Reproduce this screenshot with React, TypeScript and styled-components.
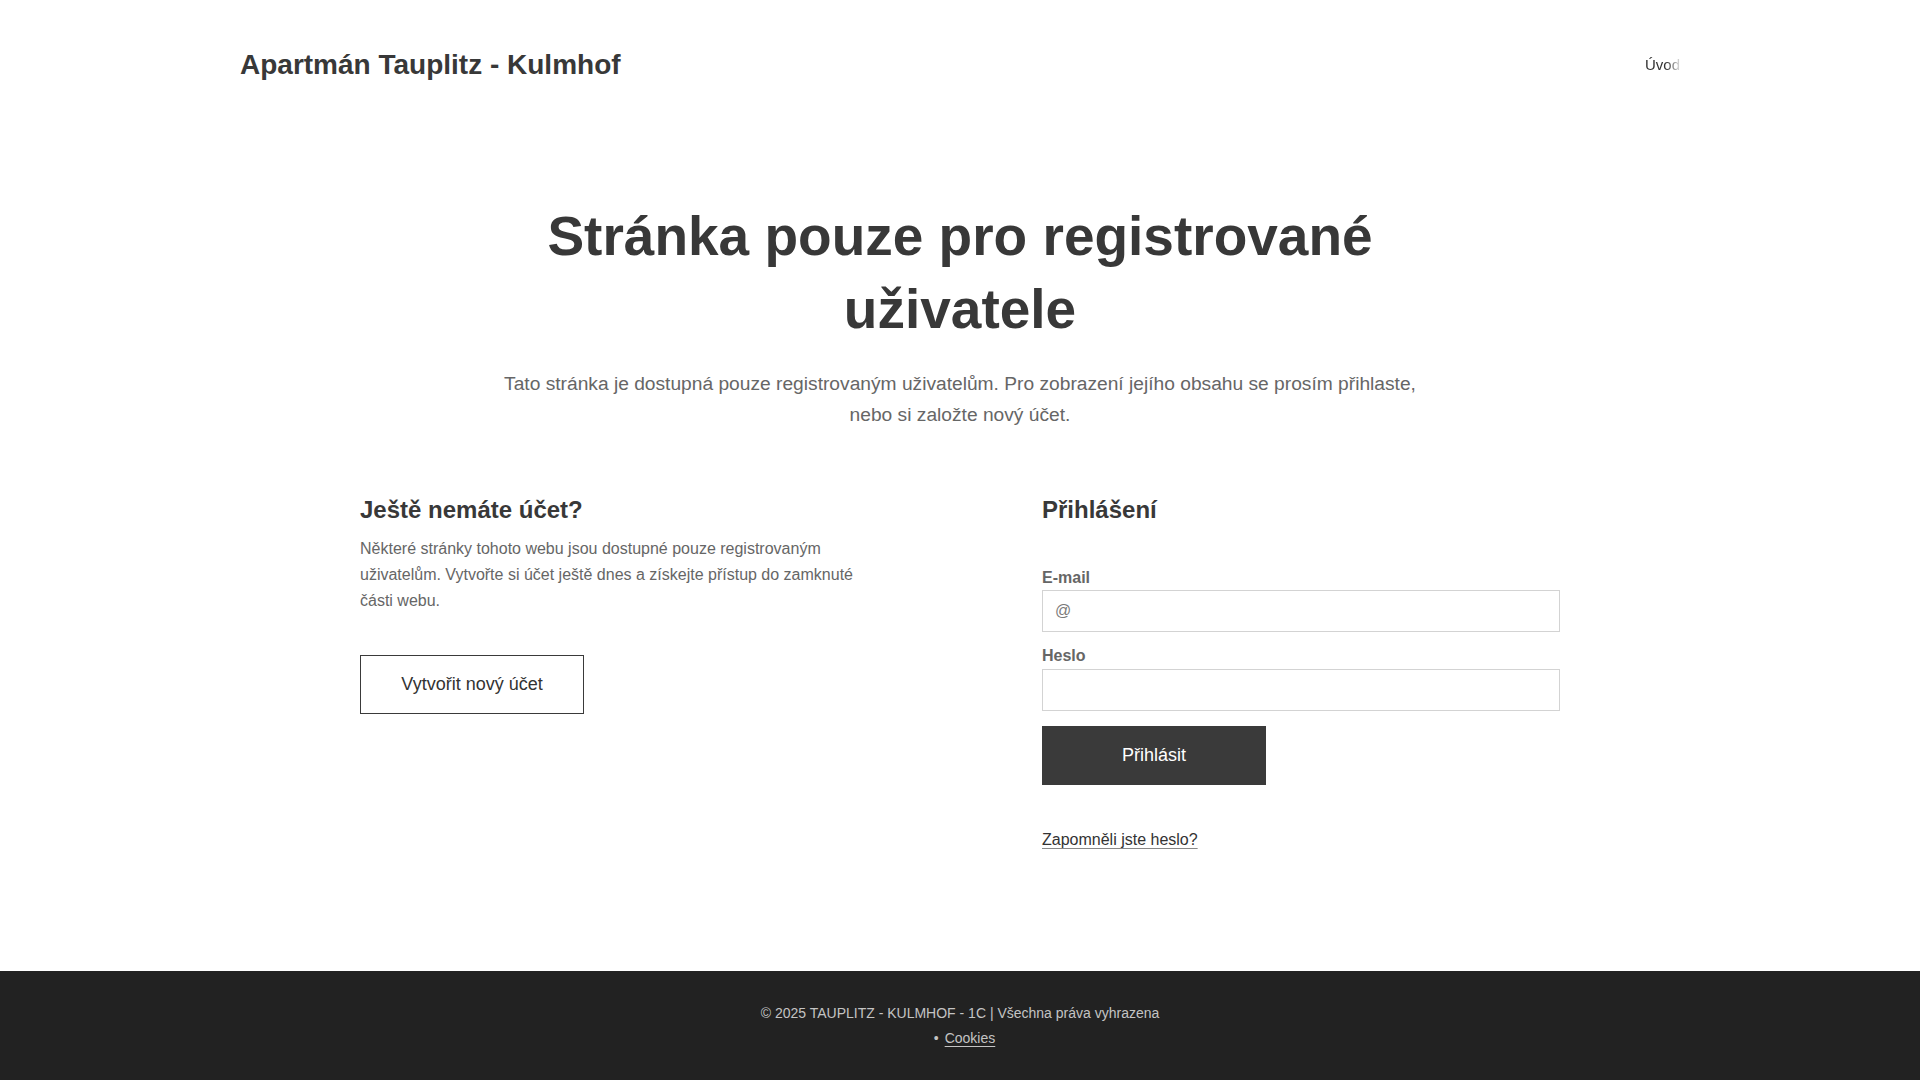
import * as React from 'react'
import styled, { createGlobalStyle } from 'styled-components'

const GlobalStyle = createGlobalStyle`
    * {
        box-sizing: border-box;
    }
    body {
        margin: 0;
        background: #ffffff;
        color: #383838;
        font-family: 'Liberation Sans', Arial, sans-serif;
    }
`

const Page = styled.div`
    display: flex;
    flex-direction: column;
    min-height: 100vh;
`

const Header = styled.header`
    display: flex;
    align-items: center;
    justify-content: space-between;
    width: 1440px;
    height: 130px;
    margin: 0 auto;
`

const Logo = styled.a`
    font-size: 28px;
    font-weight: 700;
    color: #383838;
    text-decoration: none;
`

const Nav = styled.ul`
    display: flex;
    margin: 0;
    padding: 0;
    list-style: none;
    -webkit-mask-image: linear-gradient(to right, #000 calc(100% - 14px), rgba(0, 0, 0, 0.15));
    mask-image: linear-gradient(to right, #000 calc(100% - 14px), rgba(0, 0, 0, 0.15));
`

const NavLink = styled.a`
    font-size: 15px;
    color: #333333;
    text-decoration: none;
`

const Main = styled.main`
    flex: 1;
    padding-bottom: 80px;
`

const Hero = styled.section`
    width: 940px;
    margin: 0 auto;
    padding-top: 70px;
    text-align: center;
`

const Title = styled.h1`
    margin: 0;
    font-size: 55px;
    line-height: 73px;
    font-weight: 700;
    color: #383838;
`

const Lead = styled.p`
    margin: 22px 0 0;
    font-size: 19.2px;
    line-height: 31px;
    color: #666666;
`

const Columns = styled.div`
    display: grid;
    grid-template-columns: 518px 518px;
    column-gap: 164px;
    width: 1200px;
    margin: 65px auto 0;
`

const Column = styled.div`
    display: flex;
    flex-direction: column;
    align-items: flex-start;
`

const SectionTitle = styled.h2`
    margin: 0;
    font-size: 24px;
    line-height: 29px;
    font-weight: 700;
    color: #383838;
`

const Text = styled.p`
    margin: 12px 0 0;
    font-size: 16px;
    line-height: 26px;
    color: #666666;
`

const Button = styled.button<{ filled?: boolean }>`
    height: 59px;
    width: 224px;
    padding: 0 40px;
    border: 1px solid #3a3a3a;
    border-radius: 0;
    background: ${props => (props.filled ? '#3a3a3a' : '#ffffff')};
    color: ${props => (props.filled ? '#ffffff' : '#333333')};
    font-family: inherit;
    font-size: 18px;
    cursor: pointer;
`

const OutlineButton = styled(Button)`
    margin-top: 41px;
`

const Form = styled.form`
    display: flex;
    flex-direction: column;
    width: 100%;
    margin-top: 44px;
`

const Label = styled.label`
    display: block;
    margin-bottom: 3px;
    font-size: 16px;
    line-height: 19px;
    font-weight: 700;
    color: #666666;
`

const Field = styled.div`
    & + & {
        margin-top: 14px;
    }
    & + & > label {
        margin-bottom: 4px;
    }
`

const Input = styled.input`
    display: block;
    width: 100%;
    height: 42px;
    padding: 0 12px;
    border: 1px solid #d3d3d3;
    border-radius: 0;
    font-family: inherit;
    font-size: 16px;
    color: #333333;
    outline: none;

    &::placeholder {
        color: #7a7a7a;
    }
`

const SubmitButton = styled(Button)`
    margin-top: 15px;
`

const ForgotLink = styled.a`
    margin-top: 42px;
    font-size: 16px;
    line-height: 26px;
    color: #333333;
    text-decoration: underline;
    text-decoration-color: #888888;
    text-underline-offset: 3px;
`

const Footer = styled.footer`
    padding: 30px 0 29px;
    background: #222222;
    color: #c4c4c4;
    font-size: 14px;
    line-height: 25px;
    text-align: center;
`

const FooterLinks = styled.ul`
    margin: 0;
    padding: 0;
    list-style: none;
`

const FooterItem = styled.li`
    padding-left: 9px;

    &::before {
        content: '•';
        margin-right: 6px;
    }
`

const FooterLink = styled.a`
    color: #c4c4c4;
    text-decoration: underline;
    text-underline-offset: 3px;
`

const App: React.FunctionComponent = () => {
    return (
        <Page>
            <GlobalStyle />
            <Header>
                <Logo href="#">Apartmán Tauplitz - Kulmhof</Logo>
                <Nav>
                    <li>
                        <NavLink href="#">Úvod</NavLink>
                    </li>
                </Nav>
            </Header>
            <Main>
                <Hero>
                    <Title>Stránka pouze pro registrované uživatele</Title>
                    <Lead>
                        Tato stránka je dostupná pouze registrovaným uživatelům.
                        Pro zobrazení jejího obsahu se prosím přihlaste, nebo si
                        založte nový účet.
                    </Lead>
                </Hero>
                <Columns>
                    <Column>
                        <SectionTitle>Ještě nemáte účet?</SectionTitle>
                        <Text>
                            Některé stránky tohoto webu jsou dostupné pouze
                            registrovaným uživatelům. Vytvořte si účet ještě
                            dnes a získejte přístup do zamknuté části webu.
                        </Text>
                        <OutlineButton type="button">
                            Vytvořit nový účet
                        </OutlineButton>
                    </Column>
                    <Column>
                        <SectionTitle>Přihlášení</SectionTitle>
                        <Form onSubmit={e => e.preventDefault()}>
                            <Field>
                                <Label htmlFor="email">E-mail</Label>
                                <Input id="email" type="email" placeholder="@" />
                            </Field>
                            <Field>
                                <Label htmlFor="password">Heslo</Label>
                                <Input id="password" type="password" />
                            </Field>
                            <div>
                                <SubmitButton type="submit" filled>
                                    Přihlásit
                                </SubmitButton>
                            </div>
                        </Form>
                        <ForgotLink href="#">Zapomněli jste heslo?</ForgotLink>
                    </Column>
                </Columns>
            </Main>
            <Footer>
                <div>© 2025 TAUPLITZ - KULMHOF - 1C | Všechna práva vyhrazena</div>
                <FooterLinks>
                    <FooterItem>
                        <FooterLink href="#">Cookies</FooterLink>
                    </FooterItem>
                </FooterLinks>
            </Footer>
        </Page>
    )
}

export default App
